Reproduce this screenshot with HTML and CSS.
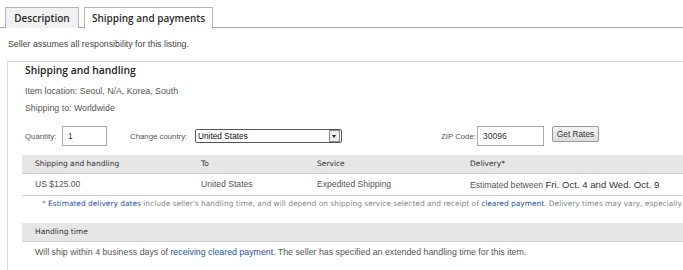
FILE: index.html
```html
<!DOCTYPE html>
<html lang="en">
    <head>
        <meta charset="UTF-8">
        <title>Shipping and payments</title>
        <link rel="stylesheet" href="styles.css">
    </head>
    <body>
        <div class="tabs">
            <span class="tab first">Description</span>
            <span class="tab active">Shipping and payments</span>
        </div>

        <p class="notice">Seller assumes all responsibility for this listing.</p>

        <div class="box">
            <h2>Shipping and handling</h2>
            <p class="info">Item location: Seoul, N/A, Korea, South</p>
            <p class="info">Shipping to: Worldwide</p>

            <div class="calc">
                <label class="qty_label">Quantity:</label>
                <span class="field qty">1</span>
                <label class="country_label">Change country:</label>
                <span class="select">United States<span class="arrow"></span></span>
                <label class="zip_label">ZIP Code:</label>
                <span class="field zip">30096</span>
                <span class="button">Get Rates</span>
            </div>

            <div class="table">
                <div class="row head">
                    <span class="c1">Shipping and handling</span>
                    <span class="c2">To</span>
                    <span class="c3">Service</span>
                    <span class="c4">Delivery*</span>
                </div>
                <div class="row data">
                    <span class="c1">US $125.00</span>
                    <span class="c2">United States</span>
                    <span class="c3">Expedited Shipping</span>
                    <span class="c4">Estimated between <b>Fri. Oct. 4 and Wed. Oct. 9</b></span>
                </div>
            </div>
            <p class="footnote">* <a href="#">Estimated delivery dates</a> include seller's handling time, and will depend on shipping service selected and receipt of <a href="#">cleared payment</a>. Delivery times may vary, especially during peak periods.</p>

            <div class="table">
                <div class="row head">
                    <span class="c1">Handling time</span>
                </div>
            </div>
            <p class="handling">Will ship within 4 business days of <a href="#">receiving cleared payment</a>. The seller has specified an extended handling time for this item.</p>
        </div>
    </body>
</html>
```

FILE: styles.css
```css
* {
    margin: 0;
    padding: 0;
}
html {
    background-color: white;
}
body {
    width: 760px;
    overflow: hidden;
    font-family: "Liberation Sans", Arial, sans-serif;
    color: #555;
}
a {
    color: #2a5595;
    text-decoration: none;
}

.tabs {
    display: flex;
    gap: 5px;
    height: 20px;
    padding: 7px 0 0 5px;
    border-bottom: 1px solid #a8a8a8;
}
.tab {
    height: 20px;
    line-height: 21px;
    text-align: center;
    border: 1px solid #b4b4b4;
    border-bottom: none;
    background-color: #f1f1f1;
    font-family: "Open Sans", sans-serif;
    font-weight: 600;
    font-size: 10px;
    color: #2a2a2a;
}
.tab.first {
    width: 72px;
}
.tab.active {
    width: 127px;
    height: 21px;
    background-color: white;
}

.notice {
    padding: 11px 0 0 8px;
    height: 22px;
    font-size: 8.8px;
    color: #444;
}

.box {
    margin-left: 7px;
    border: 1px solid #dcdcdc;
    padding: 2px 0 20px 0;
}
.box h2 {
    padding-left: 17px;
    height: 18px;
    line-height: 12px;
    font-family: "Open Sans", sans-serif;
    font-weight: 600;
    font-size: 10.3px;
    color: #222;
}
.info {
    padding-left: 17px;
    height: 17px;
    line-height: 18px;
    font-size: 8.8px;
}

.calc {
    display: flex;
    align-items: center;
    height: 22px;
    margin-top: 9px;
    padding-left: 17px;
    font-size: 7.8px;
}
.qty_label {
    width: 37px;
}
.country_label {
    width: 65px;
    margin-left: 23px;
}
.zip_label {
    width: 36px;
    margin-left: 99px;
}
.field {
    height: 18px;
    line-height: 18px;
    padding-left: 5px;
    border: 1px solid #aaa;
    font-size: 8.5px;
    color: #333;
}
.qty {
    width: 38px;
}
.zip {
    width: 60px;
}
.select {
    position: relative;
    width: 143px;
    height: 12px;
    line-height: 12px;
    padding-left: 2px;
    border: 1px solid #555;
    border-radius: 2px;
    font-size: 8.3px;
    color: #111;
}
.arrow {
    position: absolute;
    right: 1px;
    top: 0;
    width: 9px;
    height: 10px;
    border: 1px solid #888;
    background: #eee;
}
.arrow::after {
    content: "";
    position: absolute;
    left: 2px;
    top: 4px;
    border-left: 2.5px solid transparent;
    border-right: 2.5px solid transparent;
    border-top: 3px solid #222;
}
.button {
    margin-left: 8px;
    margin-top: -4px;
    width: 45px;
    height: 14px;
    line-height: 14px;
    text-align: center;
    border: 1px solid #999;
    border-radius: 2px;
    background: linear-gradient(#f4f4f4, #dcdcdc);
    font-size: 8.3px;
    color: #333;
}

.table {
    margin-left: 14px;
    margin-top: 8px;
}
.row {
    display: flex;
    border-bottom: 1px solid #d0d0d0;
}
.row span {
    padding-left: 13px;
    box-sizing: border-box;
}
.head {
    height: 18px;
    line-height: 17px;
    background-color: #e6e6e6;
    font-family: "DejaVu Sans", Verdana, sans-serif;
    font-size: 7.5px;
    color: #333;
}
.data {
    height: 21px;
    line-height: 21px;
    font-size: 8.6px;
}
.data b {
    font-weight: normal;
    font-size: 9.6px;
    color: #333;
}
.c1 {
    width: 166px;
}
.c2 {
    width: 116px;
}
.c3 {
    width: 153px;
}
.c4 {
    width: 300px;
}
.footnote {
    margin-left: 14px;
    padding-left: 20px;
    height: 15px;
    line-height: 15px;
    white-space: nowrap;
    font-family: "DejaVu Sans", Verdana, sans-serif;
    font-size: 7.45px;
    color: #888;
}
.footnote + .table {
    margin-top: 12px;
}
.handling {
    padding-left: 27px;
    height: 20px;
    line-height: 20px;
    white-space: nowrap;
    font-size: 8.8px;
}
```
